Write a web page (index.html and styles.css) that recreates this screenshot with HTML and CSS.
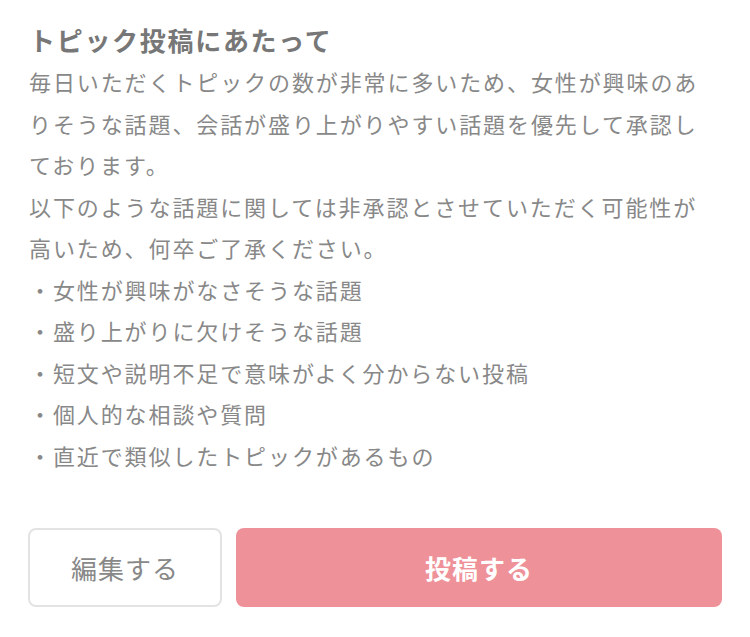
FILE: index.html
```html
<!DOCTYPE html>
<html lang="ja">
<head>
    <meta charset="UTF-8">
    <meta name="viewport" content="width=device-width, initial-scale=1.0">
    <title>トピック投稿にあたって</title>
    <link rel="stylesheet" href="styles.css">
</head>
<body>
    <div class="notice">
        <h2 class="notice-title">トピック投稿にあたって</h2>
        <p class="notice-text">毎日いただくトピックの数が非常に多いため、女性が興味のありそうな話題、会話が盛り上がりやすい話題を優先して承認しております。</p>
        <p class="notice-text">以下のような話題に関しては非承認とさせていただく可能性が高いため、何卒ご了承ください。</p>
        <ul class="notice-list">
            <li>・女性が興味がなさそうな話題</li>
            <li>・盛り上がりに欠けそうな話題</li>
            <li>・短文や説明不足で意味がよく分からない投稿</li>
            <li>・個人的な相談や質問</li>
            <li>・直近で類似したトピックがあるもの</li>
        </ul>
    </div>
    <div class="actions">
        <button class="btn btn-edit">編集する</button>
        <button class="btn btn-post">投稿する</button>
    </div>
</body>
</html>
```

FILE: styles.css
```css
body {
    font-family: "Noto Sans CJK JP", "Noto Sans", sans-serif;
    background: #fff;
    margin: 0;
    padding: 19px 28px 30px;
    color: #888;
}
.notice {
    max-width: 682px;
    padding-left: 1px;
}
.notice-title {
    font-size: 26px;
    font-weight: bold;
    color: #777;
    line-height: 42px;
    letter-spacing: 1.7px;
    margin: 0;
}
.notice-text {
    font-size: 22px;
    line-height: 41.5px;
    letter-spacing: 1.9px;
    margin: 0;
}
.notice-list {
    list-style: none;
    font-size: 22px;
    line-height: 41.5px;
    letter-spacing: 1.9px;
    margin: 0;
    padding: 0;
}
.actions {
    display: flex;
    gap: 14px;
    margin-top: 52px;
}
.btn {
    height: 79px;
    border-radius: 8px;
    font-family: "Noto Sans CJK JP", sans-serif;
    font-size: 26px;
    letter-spacing: 1px;
    cursor: pointer;
}
.btn-edit {
    width: 194px;
    background: #fff;
    border: 2px solid #e3e3e3;
    color: #888;
}
.btn-post {
    flex: 1;
    background: #ef9199;
    border: none;
    color: #fff;
    font-weight: bold;
}
```
